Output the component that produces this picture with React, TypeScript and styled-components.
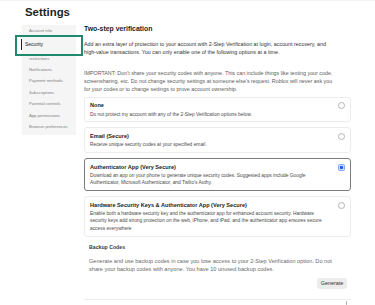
import React from "react";
import styled, { createGlobalStyle, css } from "styled-components";

const GlobalStyle = createGlobalStyle`
  html, body { margin: 0; padding: 0; background: #ffffff; }
  body { font-family: "Liberation Sans", Arial, sans-serif; color: #222; }
  * { box-sizing: border-box; }
`;

const Page = styled.div`
  position: relative;
  width: 375px;
  height: 305px;
  overflow: hidden;
  border-top: 1px solid #f3f3f3;
`;

const Title = styled.h1`
  margin: 0;
  height: 23px;
  padding-left: 25px;
  font-size: 11.4px;
  line-height: 23px;
  font-weight: 700;
  color: #1f1f1f;
`;

const Layout = styled.div`
  display: flex;
  align-items: flex-start;
  gap: 8px;
  padding-left: 22px;
`;

const Sidebar = styled.nav`
  width: 54px;
  margin-top: 1px;
  padding-bottom: 3px;
  background: #f5f5f5;
  display: flex;
  flex-direction: column;
`;

const NavItem = styled.div<{ $active?: boolean }>`
  position: relative;
  height: 11.4px;
  line-height: 11.4px;
  padding-left: 7px;
  font-size: 4.2px;
  color: #808080;
  white-space: nowrap;
  ${(p) =>
    p.$active &&
    css`
      height: 16.3px;
      line-height: 16.3px;
      padding-left: 3px;
      font-size: 5px;
      color: #222;
      &::before {
        content: "";
        position: absolute;
        left: -1px;
        top: 3px;
        width: 1.4px;
        height: 11px;
        background: #222;
      }
    `}
`;

const Main = styled.main`
  width: 267px;
  display: flex;
  flex-direction: column;
`;

const Heading = styled.h2`
  margin: 0;
  font-size: 6.9px;
  line-height: 9px;
  font-weight: 700;
  color: #1c1c1c;
`;

const Para = styled.p<{ $muted?: boolean }>`
  margin: ${(p) => (p.$muted ? "12.5px" : "7px")} 0 0;
  font-size: 5.35px;
  line-height: 8px;
  color: ${(p) => (p.$muted ? "#5c5c5c" : "#333")};
  white-space: nowrap;
`;

const Options = styled.div`
  margin-top: 4px;
  display: flex;
  flex-direction: column;
  gap: 5px;
`;

const OptionCard = styled.div<{ $selected?: boolean }>`
  display: flex;
  align-items: flex-start;
  justify-content: space-between;
  padding: 4.5px 5px 3.5px 5px;
  border: 1px solid ${(p) => (p.$selected ? "#7c7c7c" : "#ececec")};
  border-radius: 3px;
  background: #fff;
`;

const OptionText = styled.div`
  display: flex;
  flex-direction: column;
  gap: 1.5px;
`;

const OptionTitle = styled.div`
  font-size: 5.6px;
  line-height: 7px;
  font-weight: 700;
  color: #222;
  white-space: nowrap;
`;

const OptionDesc = styled.div`
  font-size: 4.85px;
  line-height: 7.3px;
  color: #4a4a4a;
  white-space: nowrap;
`;

const Radio = styled.span<{ $checked?: boolean }>`
  flex: none;
  width: 7px;
  height: 7px;
  border-radius: 50%;
  border: 0.7px solid #b4b4b4;
  background: #fff;
  display: flex;
  align-items: center;
  justify-content: center;
  ${(p) =>
    p.$checked &&
    css`
      width: 7.5px;
      height: 7.5px;
      border-radius: 1.6px;
      border: 1px solid #7ea8f2;
      background: #c9dcfc;
      &::after {
        content: "";
        width: 3.4px;
        height: 3.4px;
        border-radius: 0.8px;
        background: #1463ea;
      }
    `}
`;

const Backup = styled.section`
  margin-top: 6.5px;
  padding: 0 4px 0 5px;
  display: flex;
  flex-direction: column;
`;

const BackupTitle = styled.h3`
  margin: 0;
  font-size: 5.2px;
  line-height: 8px;
  font-weight: 700;
  color: #3a3a3a;
`;

const BackupText = styled.p`
  margin: 6px 0 0;
  font-size: 5.58px;
  line-height: 8.3px;
  color: #6a6a6a;
  white-space: nowrap;
`;

const ButtonRow = styled.div`
  margin-top: 4.3px;
  display: flex;
  justify-content: flex-end;
`;

const GenerateButton = styled.button`
  width: 30px;
  height: 11px;
  padding: 0;
  border: none;
  border-radius: 3px;
  background: #ececec;
  font-family: inherit;
  font-size: 5.4px;
  color: #333;
`;

const Divider = styled.hr`
  margin: 10px 0 0;
  border: none;
  border-top: 1px solid #eeeeee;
`;

const TailRow = styled.div`
  display: flex;
  justify-content: flex-end;
  padding-right: 4px;
  margin-top: 1px;
`;

const TailMark = styled.span`
  width: 1.2px;
  height: 4px;
  background: #b5b5b5;
`;

const Highlight = styled.div`
  position: absolute;
  left: 15px;
  top: 34px;
  width: 68px;
  height: 21px;
  border: 2px solid #1f8a6e;
  pointer-events: none;
`;

const navItems = [
  "Account info",
  "Security",
  "restrictions",
  "Notifications",
  "Payment methods",
  "Subscriptions",
  "Parental controls",
  "App permissions",
  "Browser preferences",
];

type Option = { title: string; lines: string[]; selected?: boolean };

const options: Option[] = [
  {
    title: "None",
    lines: ["Do not protect my account with any of the 2-Step Verification options below."],
  },
  {
    title: "Email (Secure)",
    lines: ["Receive unique security codes at your specified email."],
  },
  {
    title: "Authenticator App (Very Secure)",
    lines: [
      "Download an app on your phone to generate unique security codes. Suggested apps include Google",
      "Authenticator, Microsoft Authenticator, and Twilio's Authy.",
    ],
    selected: true,
  },
  {
    title: "Hardware Security Keys & Authenticator App (Very Secure)",
    lines: [
      "Enable both a hardware security key and the authenticator app for enhanced account security. Hardware",
      "security keys add strong protection on the web, iPhone, and iPad, and the authenticator app ensures secure",
      "access everywhere",
    ],
  },
];

export default function App() {
  return (
    <Page>
      <GlobalStyle />
      <Title>Settings</Title>
      <Layout>
        <Sidebar>
          {navItems.map((item) => (
            <NavItem key={item} $active={item === "Security"}>
              {item}
            </NavItem>
          ))}
        </Sidebar>
        <Main>
          <Heading>Two-step verification</Heading>
          <Para>
            Add an extra layer of protection to your account with 2-Step Verification at login, account recovery, and
            <br />
            high-value transactions. You can only enable one of the following options at a time.
          </Para>
          <Para $muted>
            IMPORTANT: Don't share your security codes with anyone. This can include things like texting your code,
            <br />
            screensharing, etc. Do not change security settings at someone else's request. Roblox will never ask you
            <br />
            for your codes or to change settings to prove account ownership.
          </Para>
          <Options>
            {options.map((o) => (
              <OptionCard key={o.title} $selected={o.selected}>
                <OptionText>
                  <OptionTitle>{o.title}</OptionTitle>
                  <OptionDesc>
                    {o.lines.map((l, i) => (
                      <React.Fragment key={i}>
                        {i > 0 && <br />}
                        {l}
                      </React.Fragment>
                    ))}
                  </OptionDesc>
                </OptionText>
                <Radio $checked={o.selected} />
              </OptionCard>
            ))}
          </Options>
          <Backup>
            <BackupTitle>Backup Codes</BackupTitle>
            <BackupText>
              Generate and use backup codes in case you lose access to your 2-Step Verification option. Do not
              <br />
              share your backup codes with anyone. You have 10 unused backup codes.
            </BackupText>
            <ButtonRow>
              <GenerateButton>Generate</GenerateButton>
            </ButtonRow>
          </Backup>
          <Divider />
          <TailRow>
            <TailMark />
          </TailRow>
        </Main>
      </Layout>
      <Highlight />
    </Page>
  );
}
